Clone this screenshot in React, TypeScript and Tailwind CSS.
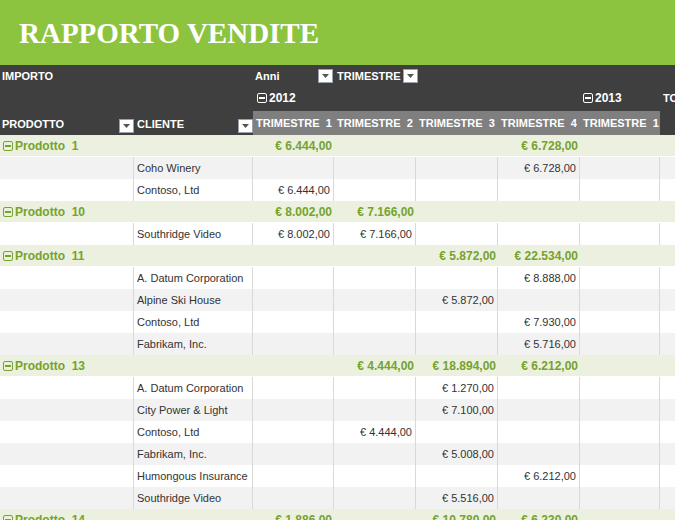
const cols = [134, 119, 81, 82, 82, 82, 80];

type Row = { g?: string; c?: string; v: (string | null)[]; alt?: boolean };

const rows: Row[] = [
  { g: 'Prodotto 1', v: ['€ 6.444,00', null, null, '€ 6.728,00', null] },
  { c: 'Coho Winery', v: [null, null, null, '€ 6.728,00', null], alt: true },
  { c: 'Contoso, Ltd', v: ['€ 6.444,00', null, null, null, null] },
  { g: 'Prodotto 10', v: ['€ 8.002,00', '€ 7.166,00', null, null, null] },
  { c: 'Southridge Video', v: ['€ 8.002,00', '€ 7.166,00', null, null, null] },
  { g: 'Prodotto 11', v: [null, null, '€ 5.872,00', '€ 22.534,00', null] },
  { c: 'A. Datum Corporation', v: [null, null, null, '€ 8.888,00', null] },
  { c: 'Alpine Ski House', v: [null, null, '€ 5.872,00', null, null], alt: true },
  { c: 'Contoso, Ltd', v: [null, null, null, '€ 7.930,00', null] },
  { c: 'Fabrikam, Inc.', v: [null, null, null, '€ 5.716,00', null], alt: true },
  { g: 'Prodotto 13', v: [null, '€ 4.444,00', '€ 18.894,00', '€ 6.212,00', null] },
  { c: 'A. Datum Corporation', v: [null, null, '€ 1.270,00', null, null] },
  { c: 'City Power & Light', v: [null, null, '€ 7.100,00', null, null], alt: true },
  { c: 'Contoso, Ltd', v: [null, '€ 4.444,00', null, null, null] },
  { c: 'Fabrikam, Inc.', v: [null, null, '€ 5.008,00', null, null], alt: true },
  { c: 'Humongous Insurance', v: [null, null, null, '€ 6.212,00', null] },
  { c: 'Southridge Video', v: [null, null, '€ 5.516,00', null, null], alt: true },
  { g: 'Prodotto 14', v: ['€ 1.886,00', null, '€ 10.780,00', '€ 6.230,00', null] },
];

const Drop = () => (
  <span className="inline-flex flex-none items-center justify-center w-[15px] h-[14px] bg-white border border-gray-400">
    <svg width="7" height="4" viewBox="0 0 7 4"><path d="M0 0h7L3.5 4z" fill="#555" /></svg>
  </span>
);

const Minus = () => (
  <span className="inline-flex flex-none items-center justify-center w-[10px] h-[10px] border border-current rounded-[2px] mr-[2px]">
    <span className="w-[6px] h-[2px] bg-current" />
  </span>
);

export default function App() {
  return (
    <div className="w-[675px] h-[520px] overflow-hidden bg-white" style={{ fontFamily: '"Liberation Sans", Arial, sans-serif' }}>
      <div className="h-[65px] bg-[#8cc43f] flex items-center pl-[19px]">
        <h1 className="text-white text-[29px] font-bold pt-[2px]" style={{ fontFamily: '"Liberation Serif", serif' }}>RAPPORTO VENDITE</h1>
      </div>
      <div className="h-[70px] bg-[#3f3f3f] text-white text-[11px] font-bold flex flex-col whitespace-nowrap">
        <div className="h-[22px] flex items-center">
          <span className="w-[253px] pl-[2px]">IMPORTO</span>
          <span className="w-[65px] pl-[2px]">Anni</span>
          <Drop />
          <span className="ml-[4px] mr-[2px]">TRIMESTRE</span>
          <Drop />
        </div>
        <div className="h-[22px] flex items-center">
          <span className="w-[257px] flex-none" />
          <span className="w-[326px] flex-none flex items-center text-[12px]"><Minus />2012</span>
          <span className="w-[80px] flex-none flex items-center text-[12px]"><Minus />2013</span>
          <span>TO</span>
        </div>
        <div className="flex-1 flex">
          <div className="w-[134px] flex items-end pb-[2px] pl-[2px] justify-between">
            <span className="self-center mt-[6px]">PRODOTTO</span><Drop />
          </div>
          <div className="w-[119px] flex items-end pb-[2px] pl-[3px] justify-between">
            <span className="self-center mt-[6px]">CLIENTE</span><Drop />
          </div>
          <div className="w-[407px] mt-[2px] bg-[#7f7f7f] flex">
            {['TRIMESTRE  1', 'TRIMESTRE  2', 'TRIMESTRE  3', 'TRIMESTRE  4', 'TRIMESTRE  1'].map((t, i) => (
              <div key={i} style={{ width: cols[i + 2] }} className="flex-none flex items-center pl-[3px] whitespace-pre">{t}</div>
            ))}
          </div>
        </div>
      </div>
      {rows.map((r, i) =>
        r.g ? (
          <div key={i} className="h-[22px] bg-[#ebf1de] flex items-center text-[12px] font-bold text-[#76a22e] border-b border-white whitespace-nowrap">
            <div style={{ width: cols[0] + cols[1] }} className="flex-none flex items-center pl-[3px] whitespace-pre"><Minus />{r.g.replace(' ', '  ')}</div>
            {r.v.map((v, j) => (
              <div key={j} style={{ width: cols[j + 2] }} className="flex-none text-right pr-[2px]">{v}</div>
            ))}
          </div>
        ) : (
          <div key={i} className={`h-[22px] flex text-[11px] text-[#333] whitespace-nowrap ${r.alt ? 'bg-[#f2f2f2]' : 'bg-white'}`}>
            <div style={{ width: cols[0] }} className="flex-none border-r border-[#d9d9d9]" />
            <div style={{ width: cols[1] }} className="flex-none border-r border-[#d9d9d9] flex items-center pl-[3px]">{r.c}</div>
            {r.v.map((v, j) => (
              <div key={j} style={{ width: cols[j + 2] }} className="flex-none border-r border-[#d9d9d9] flex items-center justify-end pr-[3px]">{v}</div>
            ))}
          </div>
        )
      )}
    </div>
  );
}
